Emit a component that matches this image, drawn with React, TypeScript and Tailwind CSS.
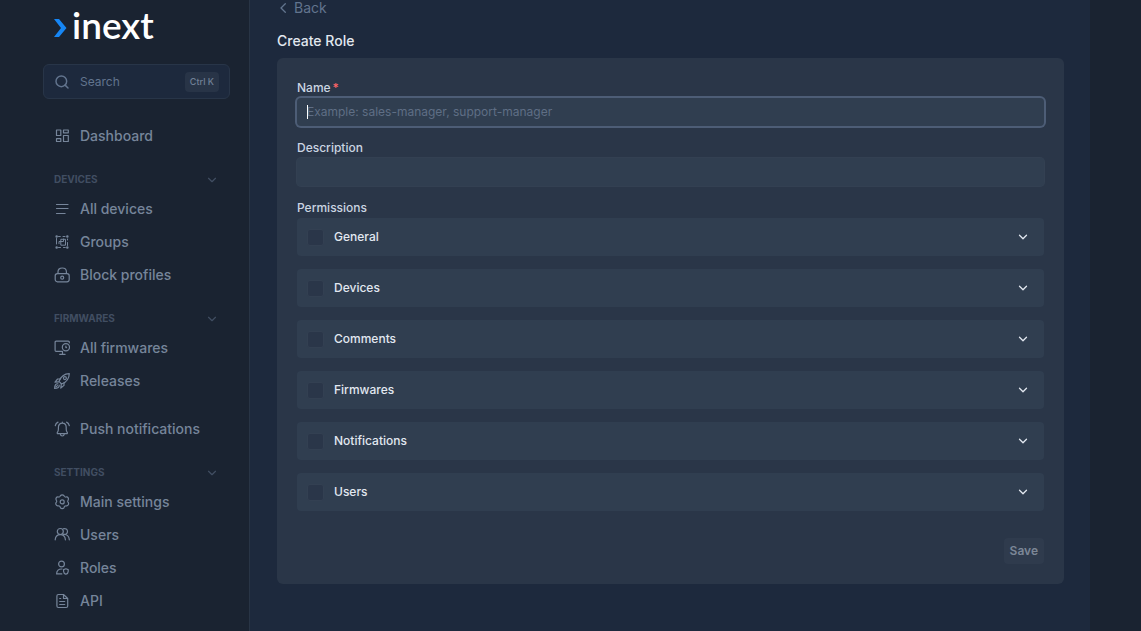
import type { ReactNode } from 'react'
import { ChevronDown, Search } from 'lucide-react'

function Icon({ children }: { children: ReactNode }) {
  return (
    <svg
      width="16"
      height="16"
      viewBox="0 0 16 16"
      fill="none"
      stroke="currentColor"
      strokeWidth="1.2"
      strokeLinecap="round"
      strokeLinejoin="round"
      className="shrink-0"
      aria-hidden="true"
    >
      {children}
    </svg>
  )
}

const icons = {
  dashboard: (
    <Icon>
      <path d="M2.500 2h4.300v5.500H2.500zM9.500 2h4.800v2.800H9.500zM2.500 10.700h4.300v2.800H2.500zM9.500 7.500h4.800v6H9.500z" />
    </Icon>
  ),
  list: (
    <Icon>
      <path d="M2.500 3.500h11.500M2.500 7.500h11.500M2.500 12.500h8.600" />
    </Icon>
  ),
  groups: (
    <Icon>
      <path d="M4.500 2.500h1.800M9 2.500h2M4.500 13.500h2M9.500 13.500h1.800M2.500 4.500v5.500M13.500 5v1M13.500 8.500v3" strokeWidth="1" />
      <path d="M5 9.700V7.500h4.500V5M6.800 10.800V5.300h4.700v5.500z" strokeWidth="1" />
      <path d="M2.600 2.500h.1M13.300 2.500h.1M2.600 13.500h.1M13.300 13.500h.1" strokeWidth="2.400" />
    </Icon>
  ),
  lock: (
    <Icon>
      <rect x="1.200" y="6.600" width="14" height="8.200" rx="2.200" />
      <path d="M4 6.500V4.700C4 2.400 5.800 1 8.200 1s4.200 1.400 4.200 3.700v1.800" />
      <circle cx="8.200" cy="10.700" r="1.500" />
    </Icon>
  ),
  monitor: (
    <Icon>
      <path d="M15.300 2.800V2.200c0-.7-.4-1-1.100-1H2.100c-.7 0-1 .3-1 1v8.100c0 .700.3 1.100 1 1.100h6.400M8.500 11.700v2.300M5.700 14.300h5.400" />
      <circle cx="11.900" cy="7.300" r="3.600" />
      <path d="M11.900 6.200v1.400h.7" />
    </Icon>
  ),
  rocket: (
    <Icon>
      <path d="M5 8.400C6.700 3.800 9.800.9 15.300.7c-.2 5.500-3.100 8.600-7.700 10.300L5 8.400z" />
      <path d="M6.100 6H3.600L1 9.200l3.700-.4M10 9.900v2.500L6.800 15l.5-3.800" />
      <circle cx="10.900" cy="5.100" r="1.500" />
      <path d="M3.900 10.800c-1.800-.4-3.300 1.300-3.300 4.600 3.300 0 5-1.500 4.600-3.300M3.400 12.600l-1.300 1.300" />
    </Icon>
  ),
  bell: (
    <Icon>
      <path d="M4 12.700c-.8 0-1.100-.8-.6-1.400.8-.9 1-1.800 1-3.300V6.300C4.400 3.800 6 2.100 8.300 2.100s3.900 1.700 3.900 4.200V8c0 1.500.2 2.400 1 3.300.5.600.2 1.400-.6 1.400H4zM8.300 2V1.100" />
      <path d="M6.300 13c.2 1.300 1 2 2 2s1.800-.7 2-2M4 1.100C2.500 1.700 1.600 3 1.300 4.700M12.600 1.100c1.500.6 2.400 1.900 2.700 3.600" />
    </Icon>
  ),
  settings: (
    <Icon>
      <path d="M6.500 1.600c.7-.9 2.700-.9 3.400 0l.6.9c.3.400.7.600 1.200.5l1-.1c1.200 0 2.200 1.700 1.600 2.800l-.4.900c-.3.500-.3.900 0 1.400l.6.900c.5 1.100-.5 2.900-1.700 2.900l-1.100.1c-.5 0-.9.200-1.200.6l-.6 1.300c-.7 1-2.700 1-3.400 0l-.6-1.300c-.3-.4-.7-.6-1.200-.6l-1.100-.1c-1.200 0-2.200-1.800-1.700-2.900l.6-.9c.3-.5.3-.9 0-1.400l-.4-.9C1.500 4.600 2.500 2.900 3.700 2.900l1 .1c.5.100.9-.1 1.200-.5z" />
      <circle cx="8.200" cy="7.900" r="2" />
    </Icon>
  ),
  users: (
    <Icon>
      <circle cx="6.300" cy="4.500" r="3" />
      <path d="M1.200 12.800c.2-3 2.100-5.200 5.100-5.200s4.900 2.200 5.100 5.200M9.300 1.800c2.200-.8 4.200.6 4.200 2.700S11.500 8 9.500 7.200M11.900 7.800c2 .6 3.200 2.500 3.400 5" />
    </Icon>
  ),
  role: (
    <Icon>
      <circle cx="7.500" cy="4" r="2.900" />
      <path d="M8 9c-3.300-.2-5.400 1.500-5.400 4.900h5.200M11.900 8.800l2.300.8v1.900c0 1.300-.9 2.300-2.300 2.800-1.400-.5-2.300-1.500-2.300-2.800V9.600z" />
    </Icon>
  ),
  file: (
    <Icon>
      <path d="M9.500 1.500H4.400c-.9 0-1.500.6-1.500 1.500v10c0 .9.600 1.500 1.500 1.500h7.800c.9 0 1.500-.6 1.500-1.500V5.500zM9.500 1.500v4h4M5.700 8.500h5M5.700 11.500h5M5.700 5.500h1" />
    </Icon>
  ),
}

type Item = { label: string; icon: ReactNode }

const sections: { title?: string; items: Item[] }[] = [
  { items: [{ label: 'Dashboard', icon: icons.dashboard }] },
  {
    title: 'Devices',
    items: [
      { label: 'All devices', icon: icons.list },
      { label: 'Groups', icon: icons.groups },
      { label: 'Block profiles', icon: icons.lock },
    ],
  },
  {
    title: 'Firmwares',
    items: [
      { label: 'All firmwares', icon: icons.monitor },
      { label: 'Releases', icon: icons.rocket },
    ],
  },
  { items: [{ label: 'Push notifications', icon: icons.bell }] },
  {
    title: 'Settings',
    items: [
      { label: 'Main settings', icon: icons.settings },
      { label: 'Users', icon: icons.users },
      { label: 'Roles', icon: icons.role },
      { label: 'API', icon: icons.file },
    ],
  },
]

const permissions = ['General', 'Devices', 'Comments', 'Firmwares', 'Notifications', 'Users']

function Sidebar() {
  return (
    <aside className="w-[250px] shrink-0 border-r border-[#283445] pt-[5px]">
      <a href="#" className="ml-[54px] flex h-[40px] items-center gap-[5px] text-white">
        <svg width="13" height="20" viewBox="0 0 13 20" className="mt-[6px]" aria-hidden="true">
          <path d="M0 1h5l7.500 9L5 19H0l7-9z" fill="#1686f5" />
        </svg>
        <span className="font-['Lato',sans-serif] text-[37px] leading-[40px] font-semibold">inext</span>
      </a>

      <div className="mt-[19px] mr-[19px] ml-[43px] flex h-[35px] items-center rounded-md border border-[#283548] bg-slate-800 px-[10px]">
        <Search size={16} strokeWidth={2.2} className="shrink-0 text-slate-500" />
        <input
          type="search"
          aria-label="Search"
          placeholder="Search"
          className="ml-[10px] min-w-0 flex-1 bg-transparent text-xs outline-none placeholder:text-slate-500"
        />
        <kbd className="flex h-5 items-center rounded bg-[#283447] px-[5px] font-['Inter',sans-serif] text-[9px] font-medium text-[#718096]">
          Ctrl K
        </kbd>
      </div>

      <nav className="mt-[20px] flex flex-col gap-[15px] pr-[30px] pl-[54px]">
        {sections.map((section, i) => (
          <div key={i}>
            {section.title && (
              <button
                type="button"
                className="flex h-[25px] w-full items-center justify-between text-[10px] font-bold text-[#414e62] uppercase"
              >
                {section.title}
                <ChevronDown size={14} strokeWidth={2} />
              </button>
            )}
            <ul>
              {section.items.map((item) => (
                <li key={item.label}>
                  <a href="#" className="flex h-[33px] items-center gap-[10px] text-sm font-medium text-[#76859a]">
                    {item.icon}
                    {item.label}
                  </a>
                </li>
              ))}
            </ul>
          </div>
        ))}
      </nav>
    </aside>
  )
}

function PermissionRow({ label }: { label: string }) {
  return (
    <div className="flex h-[38px] items-center rounded bg-[#303e50] pr-[14px] pl-[10px]">
      <label className="flex flex-1 items-center gap-[10px] leading-4">
        <input
          type="checkbox"
          className="size-[17px] appearance-none rounded-[3px] border border-[#334052] bg-[#2a3649] checked:bg-[#1686f5]"
        />
        {label}
      </label>
      <button type="button" aria-label={`Expand ${label}`}>
        <ChevronDown size={14} strokeWidth={2.2} />
      </button>
    </div>
  )
}

export default function App() {
  return (
    <div className="flex min-h-screen bg-[#1a2331] font-['Inter',sans-serif] text-slate-200">
      <Sidebar />

      <main className="max-w-[840px] flex-1 bg-slate-800 pr-[26px] pl-[27px]">
        <a href="#" className="flex w-fit items-center gap-2 pl-[3px] text-sm leading-4 text-slate-500">
          <svg width="6" height="10" viewBox="0 0 6 10" fill="none" stroke="currentColor" strokeWidth="1.3" aria-hidden="true">
            <path d="M5.300.7 1 5l4.300 4.300" strokeLinecap="round" strokeLinejoin="round" />
          </svg>
          Back
        </a>
        <h1 className="mt-[15px] text-sm leading-5 font-medium">Create Role</h1>

        <form className="mt-[7px] flex flex-col gap-3 rounded-md bg-[#2a3648] p-5 text-xs font-medium">
          <div>
            <label htmlFor="name" className="block leading-5 text-slate-300">
              Name<span className="ml-[2px] text-red-400">*</span>
            </label>
            <div className="relative">
              <input
                id="name"
                autoFocus
                placeholder="Example: sales-manager, support-manager"
                className="peer block h-7 w-full rounded bg-[#303e50] px-[10px] pb-[2px] text-xs font-normal ring-2 ring-[#4d5d76] outline-none placeholder:text-[#5f6e85] placeholder-shown:caret-transparent"
              />
              <span
                aria-hidden="true"
                className="pointer-events-none absolute top-[7px] left-[10px] hidden h-[14px] w-px bg-white peer-placeholder-shown:block"
              />
            </div>
          </div>

          <div>
            <label htmlFor="description" className="block leading-5 text-slate-300">
              Description
            </label>
            <input
              id="description"
              className="block h-7 w-full rounded bg-[#303e50] px-[10px] text-xs font-normal ring-1 ring-[#334052] outline-none"
            />
          </div>

          <fieldset>
            <legend className="leading-5 text-slate-300">Permissions</legend>
            <div className="flex flex-col gap-[13px]">
              {permissions.map((label) => (
                <PermissionRow key={label} label={label} />
              ))}
            </div>
          </fieldset>

          <button
            type="submit"
            disabled
            className="mt-[15px] h-[26px] self-end rounded bg-[#2f3b4d] px-[6px] font-semibold text-[#7c8797]"
          >
            Save
          </button>
        </form>
      </main>
    </div>
  )
}
